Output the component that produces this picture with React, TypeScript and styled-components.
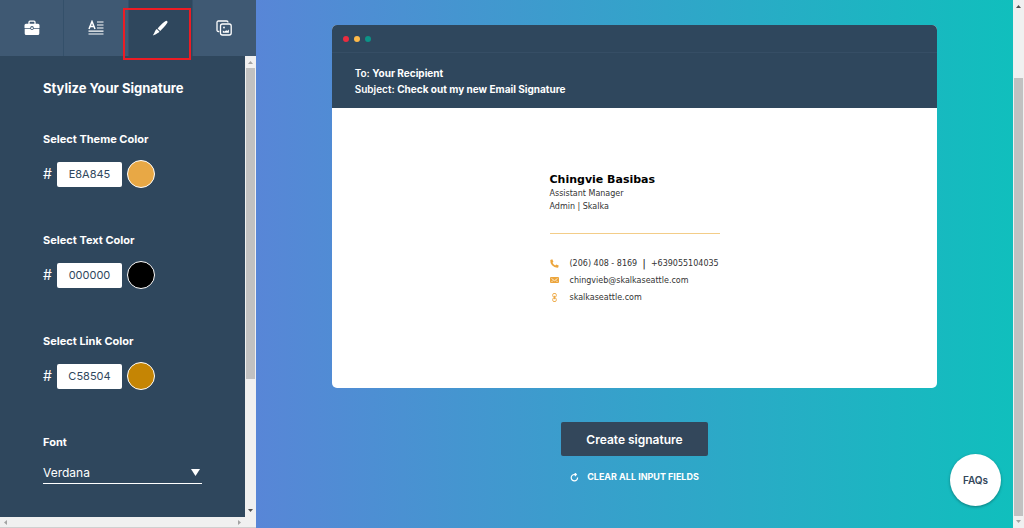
import React from "react";
import styled, { createGlobalStyle, css } from "styled-components";

const sans = `Inter, "Open Sans", sans-serif`;
const verdana = `Verdana, "DejaVu Sans", sans-serif`;
const navy = "#2f475d";

const GlobalStyle = createGlobalStyle`
  * { box-sizing: border-box; }
  body { margin: 0; font-family: ${sans}; color: #fff; overflow: hidden; }
  button, input, select { font-family: inherit; }
  h1, h2, p { margin: 0; }
`;

const Page = styled.div`
  display: flex;
  height: 100vh;
  background: #efefef;
`;

const Sidebar = styled.aside`
  position: relative;
  flex: 0 0 25%;
  display: flex;
  flex-direction: column;
  background: ${navy};
`;

const Tabs = styled.nav`
  display: flex;
  height: 56px;
`;

const Tab = styled.button<{ $active?: boolean }>`
  flex: 1;
  display: flex;
  align-items: center;
  justify-content: center;
  padding: 0;
  border: 0;
  border-right: 1px solid #34506a;
  background: ${(p) => (p.$active ? navy : "#3f5973")};
  color: #fff;
  &:last-child { border-right: 0; }
`;

const Highlight = styled.div`
  position: absolute;
  top: 8px;
  left: 123px;
  width: 68px;
  height: 52px;
  border: 2px solid #ec1c24;
  pointer-events: none;
`;

const SidebarBody = styled.div`
  flex: 1;
  min-height: 0;
  display: flex;
`;

const Form = styled.form`
  flex: 1;
  padding: 24px 43px 0;
  overflow: hidden;
`;

const Title = styled.h1`
  font-size: 13px;
  line-height: 16px;
  font-weight: 700;
  white-space: nowrap;
`;

const Group = styled.div`
  display: flex;
  flex-direction: column;
  align-items: flex-start;
  margin-top: 36px;
  height: 65px;
`;

const Label = styled.label`
  font-size: 11px;
  line-height: 14px;
  font-weight: 700;
`;

const ColorRow = styled.div`
  display: flex;
  align-items: center;
  margin-top: 14px;
`;

const Hash = styled.span`
  width: 14px;
  font-size: 14px;
  line-height: 16px;
`;

const HexInput = styled.input`
  width: 65px;
  height: 25px;
  padding: 0;
  border: 0;
  border-radius: 2px;
  background: #fff;
  color: ${navy};
  font-size: 11px;
  text-align: center;
`;

const Swatch = styled.button<{ $color: string }>`
  width: 28px;
  height: 28px;
  margin-left: 5px;
  padding: 0;
  border: 1px solid #fff;
  border-radius: 50%;
  background: ${(p) => p.$color};
`;

const SelectWrap = styled.div`
  display: flex;
  align-items: center;
  width: 159px;
  margin-top: 12px;
  border-bottom: 1px solid #fff;
`;

const Select = styled.select`
  flex: 1;
  height: 22px;
  padding: 0;
  border: 0;
  appearance: none;
  background: transparent;
  color: #fff;
  font-size: 12px;
`;

const Track = styled.div<{ $horizontal?: boolean }>`
  flex: none;
  display: flex;
  justify-content: space-between;
  background: #f0f0f0;
  ${(p) =>
    p.$horizontal
      ? css`height: 11px; align-items: center; padding: 0 14px 0 3px; border-bottom: 1px solid #cfcfcf;`
      : css`width: 11px; flex-direction: column; align-items: center; padding: 4px 0;`}
`;

const Thumb = styled.div<{ $grow: number }>`
  flex: ${(p) => p.$grow};
  width: 9px;
  margin: 3px 0;
  background: #c1c1c1;
`;

const Gap = styled.div<{ $grow: number }>`
  flex: ${(p) => p.$grow};
`;

const Main = styled.main`
  flex: 1;
  position: relative;
  display: flex;
  flex-direction: column;
  align-items: center;
  padding-top: 25px;
  background: linear-gradient(90deg, #5886d7, #10bfbd);
`;

const MailWindow = styled.section`
  width: 80%;
  border-radius: 5px;
  overflow: hidden;
  background: #fff;
`;

const Dots = styled.div`
  display: flex;
  align-items: center;
  gap: 5px;
  height: 28px;
  padding-left: 11px;
  background: ${navy};
  border-bottom: 1px solid #364e65;
`;

const Dot = styled.span<{ $color: string }>`
  width: 6px;
  height: 6px;
  border-radius: 50%;
  background: ${(p) => p.$color};
`;

const MailHeader = styled.header`
  height: 55px;
  padding: 12px 23px;
  background: ${navy};
  font-size: 10px;
  line-height: 16px;
  font-weight: 600;
  strong { font-weight: 700; }
`;

const MailBody = styled.div`
  display: flex;
  justify-content: center;
  height: 280px;
  padding-top: 64px;
  font-family: ${verdana};
  font-size: 8px;
  color: #333;
`;

const Signature = styled.div`
  width: 170px;
`;

const Name = styled.h2`
  font-size: 11px;
  line-height: 15px;
  color: #000;
`;

const Role = styled.p`
  line-height: 13px;
`;

const Rule = styled.hr`
  height: 1px;
  margin: 20px 0 21px;
  border: 0;
  background: #f3cd88;
`;

const Contact = styled.p`
  display: flex;
  align-items: center;
  height: 17px;
  white-space: nowrap;
  svg { flex: none; margin-right: 11px; }
`;

const Bar = styled.span`
  margin: 0 5px;
  line-height: 12px;
  font-size: 11px;
`;

const ContactLink = styled.a`
  color: inherit;
  text-decoration: none;
`;

const CreateButton = styled.button`
  width: 147px;
  height: 34px;
  margin-top: 34px;
  border: 0;
  border-radius: 2px;
  background: #33475b;
  color: #fff;
  font-size: 12px;
  font-weight: 600;
`;

const ClearButton = styled.button`
  display: flex;
  align-items: center;
  gap: 8px;
  margin-top: 13px;
  padding: 0;
  border: 0;
  background: none;
  color: #fff;
  font-size: 9px;
  line-height: 16px;
  font-weight: 700;
`;

const Faq = styled.button`
  position: absolute;
  right: 12px;
  bottom: 22px;
  width: 51px;
  height: 52px;
  padding: 0;
  border: 0;
  border-radius: 50%;
  background: #fff;
  box-shadow: 0 1px 3px rgba(0, 0, 0, 0.35);
  color: #33475b;
  font-size: 10px;
  font-weight: 600;
`;

const Arrow = ({ d, color }: { d: string; color: string }) => (
  <svg width="5" height="5" viewBox="0 0 5 5" fill={color} aria-hidden="true"><path d={d} /></svg>
);
const up = "M0 4L2.5 1L5 4Z";
const down = "M0 1L2.5 4L5 1Z";
const left = "M4 0L1 2.5L4 5Z";
const right = "M1 0L4 2.5L1 5Z";

const colors = [
  { id: "theme", label: "Select Theme Color", hex: "E8A845" },
  { id: "text", label: "Select Text Color", hex: "000000" },
  { id: "link", label: "Select Link Color", hex: "C58504" },
];

export default function App() {
  return (
    <>
      <GlobalStyle />
      <Page>
        <Sidebar>
          <Tabs>
            <Tab aria-label="Details">
              <svg width="16" height="16" viewBox="0 0 16 16">
                <path d="M5 4V2.2Q5 1.2 6 1.2H10Q11 1.2 11 2.2V4" fill="none" stroke="#fff" strokeWidth="1.3" />
                <path d="M2 3.8H14Q15.5 3.8 15.5 5.3V7.9H9.8A1.8 1.8 0 0 0 6.2 7.9H.5V5.3Q.5 3.8 2 3.8ZM.7 8.8H6.3A1.8 1.8 0 0 0 9.7 8.8H15.3V13.5Q15.3 15 13.8 15H2.2Q.7 15 .7 13.5Z" fill="#fff" />
                <circle cx="8" cy="8.3" r="1" fill="#fff" />
              </svg>
            </Tab>
            <Tab aria-label="Text">
              <svg width="16" height="16" viewBox="0 0 16 16" fill="none" stroke="#fff" strokeWidth="1.2">
                <path d="M1 9L4 1.5L7 9M2 6.5H6" strokeWidth="1.5" />
                <path d="M9 2H15.5M9 5H15.5M9 8H15.5M.5 11.2H15.5M.5 14H15.5" />
              </svg>
            </Tab>
            <Tab $active aria-label="Style">
              <svg width="16" height="16" viewBox="0 0 16 16" fill="#fff">
                <path d="M13.7 1Q15.8.4 15.5 2.5Q14.5 4.7 8.2 11L5.6 8.4Q11 2.500 13.700 1ZM4.900 9.100L7.500 11.700Q6.900 12.700 5.800 13.100Q3.500 15 .8 15.400Q2.300 13.300 3 11.200Q3.800 9.400 4.900 9.100Z" />
              </svg>
            </Tab>
            <Tab aria-label="Images">
              <svg width="16" height="16" viewBox="0 0 16 16" fill="none" stroke="#fff" strokeWidth="1.3">
                <path d="M3.3 11.5H2.5Q1 11.5 1 10V2.5Q1 1 2.5 1H10.5Q12 1 12 2.5" />
                <rect x="4.5" y="4" width="10.7" height="11" rx="2" />
                <path d="M6.8 12.8V10.5L8.5 11.5L10.3 10.3L11.2 11L12.900 9.500V12.800Z" fill="#fff" stroke="none" />
                <circle cx="8" cy="7.5" r=".9" fill="#fff" stroke="none" />
              </svg>
            </Tab>
          </Tabs>
          <SidebarBody>
            <Form>
              <Title>Stylize Your Signature</Title>
              {colors.map((c) => (
                <Group key={c.id}>
                  <Label htmlFor={c.id}>{c.label}</Label>
                  <ColorRow>
                    <Hash>#</Hash>
                    <HexInput id={c.id} defaultValue={c.hex} />
                    <Swatch type="button" $color={`#${c.hex}`} aria-label={c.label} />
                  </ColorRow>
                </Group>
              ))}
              <Group>
                <Label htmlFor="font">Font</Label>
                <SelectWrap>
                  <Select id="font"><option>Verdana</option></Select>
                  <svg width="13" height="8" viewBox="0 0 13 8" fill="#fff"><path d="M2 1H11L6.5 8Z" /></svg>
                </SelectWrap>
              </Group>
            </Form>
            <Track>
              <Arrow d={up} color="#a3a3a3" />
              <Thumb $grow={310} />
              <Gap $grow={126} />
              <Arrow d={down} color="#505050" />
            </Track>
          </SidebarBody>
          <Track $horizontal>
            <Arrow d={left} color="#a3a3a3" />
            <Arrow d={right} color="#a3a3a3" />
          </Track>
          <Highlight />
        </Sidebar>
        <Main>
          <MailWindow>
            <Dots>
              <Dot $color="#ea2c3f" />
              <Dot $color="#fdb94a" />
              <Dot $color="#0c9387" />
            </Dots>
            <MailHeader>
              <p>To: <strong>Your Recipient</strong></p>
              <p>Subject: <strong>Check out my new Email Signature</strong></p>
            </MailHeader>
            <MailBody>
              <Signature>
                <Name>Chingvie Basibas</Name>
                <Role>Assistant Manager</Role>
                <Role>Admin | Skalka</Role>
                <Rule />
                <Contact>
                  <svg width="9" height="9" viewBox="0 0 9 9" fill="#eca53c"><path d="M.3 1L2.3.3L3.4 2.7L2.5 3.7Q3.3 5.5 5.2 6.4L6.2 5.5L8.7 6.6L8.2 8.6Q4.500 9 2 6.300Q0 4 .3 1Z" /></svg>
                  (206) 408 - 8169<Bar>|</Bar>+639055104035
                </Contact>
                <Contact>
                  <svg width="9" height="9" viewBox="0 0 9 9"><rect y="1" width="9" height="6" rx="1" fill="#eca53c" /><path d="M1.5 2.5L4.5 4.7L7.5 2.5M1.5 6L3 4.5M7.5 6L6 4.5" fill="none" stroke="#fff" strokeWidth=".7" /></svg>
                  <ContactLink href="mailto:chingvieb@skalkaseattle.com">chingvieb@skalkaseattle.com</ContactLink>
                </Contact>
                <Contact>
                  <svg width="9" height="9" viewBox="0 0 9 9" fill="none" stroke="#eca53c" strokeWidth=".9"><rect x="2.7" y=".5" width="3.6" height="3.5" rx="1.3" /><rect x="2.7" y="5" width="3.6" height="3.5" rx="1.3" /><path d="M4.5 2.8V6.2" /></svg>
                  <ContactLink href="#site">skalkaseattle.com</ContactLink>
                </Contact>
              </Signature>
            </MailBody>
          </MailWindow>
          <CreateButton>Create signature</CreateButton>
          <ClearButton>
            <svg width="9" height="9" viewBox="0 0 9 9" fill="none" stroke="#fff" strokeWidth="1.2"><path d="M7.6 4.5A3.2 3.2 0 1 1 4.5 1.5H6" /><path d="M4.8 0L6.3 1.5L4.8 3.2" /></svg>
            CLEAR ALL INPUT FIELDS
          </ClearButton>
          <Faq>FAQs</Faq>
        </Main>
        <Track>
          <Arrow d={up} color="#505050" />
          <Gap $grow={66} />
          <Thumb $grow={438} />
          <Arrow d={down} color="#a3a3a3" />
        </Track>
      </Page>
    </>
  );
}
